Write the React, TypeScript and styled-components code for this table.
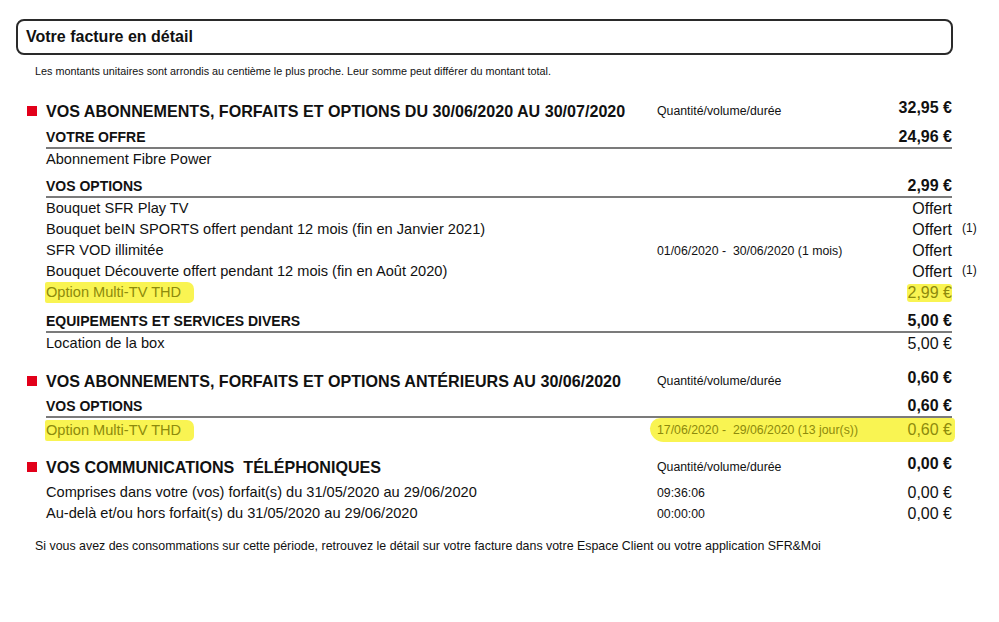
import React from 'react';
import styled, { createGlobalStyle } from 'styled-components';

const Global = createGlobalStyle`
  html, body { margin: 0; padding: 0; background: #fff; }
  body { font-family: "Liberation Sans", Arial, sans-serif; color: #111; }
`;

const Page = styled.div`
  width: 999px;
  height: 622px;
  box-sizing: border-box;
  padding: 19px 46px 0 16px;
`;

const TitleBox = styled.div`
  height: 36px;
  box-sizing: border-box;
  border: 2px solid #2a2a2a;
  border-radius: 8px;
  display: flex;
  align-items: center;
  padding-left: 8px;
  font-weight: 700;
  font-size: 16px;
`;

const Note = styled.p`
  margin: 10px 0 0 19px;
  font-size: 10.8px;
  line-height: 12px;
`;

const Main = styled.div`
  margin: 0 1px 0 30px;
`;

const Section = styled.section<{ $top: number }>`
  margin-top: ${(p) => p.$top}px;
`;

const Row = styled.div`
  display: grid;
  grid-template-columns: 611px 1fr auto;
  align-items: center;
  height: 21px;
`;

const HeadRow = styled(Row)`
  height: 20px;
`;

const SubRow = styled(Row)<{ $top: number }>`
  height: 20px;
  margin-top: ${(p) => p.$top}px;
  border-bottom: 2px solid #7b7b7b;
`;

const SectionTitle = styled.h2`
  margin: 0;
  display: flex;
  align-items: center;
  font-size: 16.1px;
  font-weight: 700;
  line-height: 20px;
  white-space: pre;
  padding-top: 1px;
`;

const Marker = styled.span`
  width: 10px;
  height: 10px;
  background: #e2001a;
  margin-left: -19px;
  margin-right: 9px;
  flex: none;
`;

const SubTitle = styled.h3`
  margin: 0;
  font-size: 14px;
  font-weight: 700;
  line-height: 20px;
`;

const Label = styled.span`
  font-size: 14.6px;
  line-height: 21px;
  white-space: nowrap;
`;

const Qty = styled.span`
  font-size: 12.3px;
  white-space: pre;
`;

const Amount = styled.span<{ $bold?: boolean; $hl?: boolean }>`
  position: relative;
  font-size: 16px;
  font-weight: ${(p) => (p.$bold ? 700 : 400)};
  text-align: right;
  white-space: nowrap;
  color: ${(p) => (p.$hl ? '#8d8a0c' : '#111')};
  ${(p) => (p.$hl ? 'background: #f9f452; padding: 0 0 0 1px; border-radius: 3px;' : '')}
`;

const HeadAmount = styled(Amount)`
  align-self: start;
  line-height: 16px;
`;

const Ref = styled.span`
  position: absolute;
  left: calc(100% + 10px);
  top: 0;
  font-size: 12px;
  font-weight: 400;
  color: #111;
`;

const Marked = styled.span`
  justify-self: start;
  display: inline-block;
  margin-left: -1px;
  padding: 0 13px 0 1px;
  line-height: 21px;
  font-size: 14.6px;
  color: #8d8a0c;
  background: #f9f452;
  border-radius: 2px 7px 5px 2px;
  white-space: nowrap;
`;

const Band = styled.div`
  grid-column: 2 / 4;
  display: flex;
  align-items: center;
  justify-content: space-between;
  height: 24px;
  margin: 0 -3px 0 -7px;
  padding: 0 3px 0 7px;
  background: #f9f452;
  border-radius: 12px 4px 6px 16px;
  color: #8d8a0c;
`;

const BandQty = styled(Qty)`
  color: #8d8a0c;
`;

const BandAmount = styled.span`
  font-size: 16px;
`;

const Footer = styled.p`
  margin: 15px 0 0 19px;
  font-size: 12.4px;
  line-height: 14px;
  white-space: nowrap;
`;

export default function App() {
  return (
    <>
      <Global />
      <Page>
        <TitleBox>Votre facture en détail</TitleBox>
        <Note>
          Les montants unitaires sont arrondis au centième le plus proche. Leur somme peut différer du montant total.
        </Note>
        <Main>
          <Section $top={23}>
            <HeadRow>
              <SectionTitle>
                <Marker />
                VOS ABONNEMENTS, FORFAITS ET OPTIONS DU 30/06/2020 AU 30/07/2020
              </SectionTitle>
              <Qty>Quantité/volume/durée</Qty>
              <HeadAmount $bold>32,95 €</HeadAmount>
            </HeadRow>

            <SubRow $top={7}>
              <SubTitle>VOTRE OFFRE</SubTitle>
              <span />
              <Amount $bold>24,96 €</Amount>
            </SubRow>
            <Row>
              <Label>Abonnement Fibre Power</Label>
            </Row>

            <SubRow $top={6}>
              <SubTitle>VOS OPTIONS</SubTitle>
              <span />
              <Amount $bold>2,99 €</Amount>
            </SubRow>
            <Row>
              <Label>Bouquet SFR Play TV</Label>
              <span />
              <Amount>Offert</Amount>
            </Row>
            <Row>
              <Label>Bouquet beIN SPORTS offert pendant 12 mois (fin en Janvier 2021)</Label>
              <span />
              <Amount>
                Offert<Ref>(1)</Ref>
              </Amount>
            </Row>
            <Row>
              <Label>SFR VOD illimitée</Label>
              <Qty>01/06/2020 -  30/06/2020 (1 mois)</Qty>
              <Amount>Offert</Amount>
            </Row>
            <Row>
              <Label>Bouquet Découverte offert pendant 12 mois (fin en Août 2020)</Label>
              <span />
              <Amount>
                Offert<Ref>(1)</Ref>
              </Amount>
            </Row>
            <Row>
              <Marked>Option Multi-TV THD</Marked>
              <span />
              <Amount $hl>2,99 €</Amount>
            </Row>

            <SubRow $top={8}>
              <SubTitle>EQUIPEMENTS ET SERVICES DIVERS</SubTitle>
              <span />
              <Amount $bold>5,00 €</Amount>
            </SubRow>
            <Row>
              <Label>Location de la box</Label>
              <span />
              <Amount>5,00 €</Amount>
            </Row>
          </Section>

          <Section $top={16}>
            <HeadRow>
              <SectionTitle>
                <Marker />
                VOS ABONNEMENTS, FORFAITS ET OPTIONS ANTÉRIEURS AU 30/06/2020
              </SectionTitle>
              <Qty>Quantité/volume/durée</Qty>
              <HeadAmount $bold>0,60 €</HeadAmount>
            </HeadRow>
            <SubRow $top={6}>
              <SubTitle>VOS OPTIONS</SubTitle>
              <span />
              <Amount $bold>0,60 €</Amount>
            </SubRow>
            <Row>
              <Marked>Option Multi-TV THD</Marked>
              <Band>
                <BandQty>17/06/2020 -  29/06/2020 (13 jour(s))</BandQty>
                <BandAmount>0,60 €</BandAmount>
              </Band>
            </Row>
          </Section>

          <Section $top={17}>
            <HeadRow>
              <SectionTitle>
                <Marker />
                VOS COMMUNICATIONS  TÉLÉPHONIQUES
              </SectionTitle>
              <Qty>Quantité/volume/durée</Qty>
              <HeadAmount $bold>0,00 €</HeadAmount>
            </HeadRow>
            <Row style={{ marginTop: 6 }}>
              <Label>Comprises dans votre (vos) forfait(s) du 31/05/2020 au 29/06/2020</Label>
              <Qty>09:36:06</Qty>
              <Amount>0,00 €</Amount>
            </Row>
            <Row>
              <Label>Au-delà et/ou hors forfait(s) du 31/05/2020 au 29/06/2020</Label>
              <Qty>00:00:00</Qty>
              <Amount>0,00 €</Amount>
            </Row>
          </Section>
        </Main>
        <Footer>
          Si vous avez des consommations sur cette période, retrouvez le détail sur votre facture dans votre Espace Client ou votre application SFR&amp;Moi
        </Footer>
      </Page>
    </>
  );
}
